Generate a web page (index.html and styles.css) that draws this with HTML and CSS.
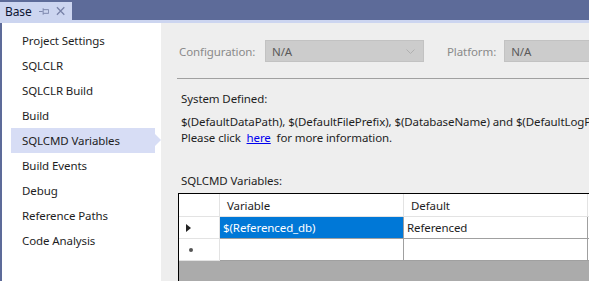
FILE: index.html
```html
<!DOCTYPE html>
<html lang="en">
<head>
    <meta charset="UTF-8">
    <title>Base - Properties</title>
    <link rel="stylesheet" href="styles.css">
</head>
<body>
    <div class="doc-well">
        <div class="tab">
            <span class="tab-title">Base</span>
            <svg class="tab-icon" width="11" height="9" viewBox="0 0 11 9">
                <path d="M0 4.5H4M4.5 1V8M4.5 2.5H10.5V6.5H4.5" fill="none" stroke="#7882a8" stroke-width="1"/>
            </svg>
            <svg class="tab-icon" width="10" height="10" viewBox="0 0 10 10">
                <path d="M1 1L9 9M9 1L1 9" stroke="#7882a8" stroke-width="1.4"/>
            </svg>
        </div>
    </div>
    <div class="window">
        <ul class="nav">
            <li>Project Settings</li>
            <li>SQLCLR</li>
            <li>SQLCLR Build</li>
            <li>Build</li>
            <li class="active">SQLCMD Variables</li>
            <li>Build Events</li>
            <li>Debug</li>
            <li>Reference Paths</li>
            <li>Code Analysis</li>
        </ul>
        <div class="page">
            <div class="config-row">
                <span class="config-label config-first">Configuration:</span>
                <div class="combo combo-config">
                    <span>N/A</span>
                    <svg width="9" height="5" viewBox="0 0 9 5">
                        <path d="M0.5 0.5L4.5 4.5L8.5 0.5" fill="none" stroke="#b0b0b0" stroke-width="1"/>
                    </svg>
                </div>
                <span class="config-label platform-label">Platform:</span>
                <div class="combo combo-platform"><span>N/A</span></div>
            </div>
            <div class="content">
                <p class="heading">System Defined:</p>
                <p class="line">$(DefaultDataPath), $(DefaultFilePrefix), $(DatabaseName) and $(DefaultLogPath)</p>
                <p class="line">Please click &nbsp;<a href="#">here</a>&nbsp; for more information.</p>
                <p class="grid-label">SQLCMD Variables:</p>
                <div class="grid">
                    <div class="row head">
                        <div class="cell rowhead"></div>
                        <div class="cell col-var">Variable</div>
                        <div class="cell col-def">Default</div>
                        <div class="cell col-rest"></div>
                    </div>
                    <div class="row">
                        <div class="cell rowhead"><span class="current"></span></div>
                        <div class="cell col-var selected">$(Referenced_db)</div>
                        <div class="cell col-def">Referenced</div>
                        <div class="cell col-rest"></div>
                    </div>
                    <div class="row">
                        <div class="cell rowhead"><span class="newrow"></span></div>
                        <div class="cell col-var"></div>
                        <div class="cell col-def"></div>
                        <div class="cell col-rest"></div>
                    </div>
                    <div class="grid-empty"></div>
                </div>
            </div>
        </div>
    </div>
</body>
</html>
```

FILE: styles.css
```css
body {
    margin: 0;
    width: 589px;
    height: 281px;
    overflow: hidden;
    font-family: 'Noto Sans', sans-serif;
    font-size: 11.5px;
    letter-spacing: -0.1px;
    color: #1e1e1e;
    background-color: #5d6b99;
}

.doc-well {
    height: 20px;
    border-bottom: 3px solid #ccd5f0;
    display: flex;
    align-items: flex-end;
}

.tab {
    width: 72px;
    height: 18px;
    background-color: #ccd5f0;
    display: flex;
    align-items: center;
    box-sizing: border-box;
    padding-left: 5px;
    font-size: 12px;
}

.tab-title {
    color: #0e1633;
    margin-right: 7px;
}

.tab-icon {
    margin-right: 7px;
}

.window {
    display: flex;
    height: 258px;
    margin-left: 2px;
}

.nav {
    list-style: none;
    margin: 0;
    padding: 5px 0 0 9px;
    width: 150px;
    background-color: white;
}

.nav li {
    position: relative;
    height: 25px;
    line-height: 25px;
    padding-left: 11px;
    width: 144px;
    box-sizing: border-box;
    white-space: nowrap;
}

.nav li.active {
    background-color: #d7ddf5;
}

.nav li.active::after {
    content: "";
    position: absolute;
    right: -6px;
    top: 6px;
    border-left: 6px solid #d7ddf5;
    border-top: 6px solid transparent;
    border-bottom: 6px solid transparent;
}

.page {
    flex: 1;
    background-color: #eeeeee;
    overflow: hidden;
}

.config-row {
    display: flex;
    align-items: center;
    height: 22px;
    margin: 17px 0 0 16px;
    padding-left: 2px;
    padding-bottom: 16px;
    border-bottom: 1px solid #a0a0a0;
}

.config-label {
    color: #8a8a8a;
    margin-right: 8px;
    white-space: nowrap;
    flex-shrink: 0;
}

.config-first {
    width: 78px;
}

.platform-label {
    margin-left: 23px;
}

.combo {
    height: 22px;
    box-sizing: border-box;
    border: 1px solid #c2c2c2;
    background-color: #cccccc;
    color: #5a5a5a;
    display: flex;
    align-items: center;
    justify-content: space-between;
    padding: 0 8px 0 6px;
    flex-shrink: 0;
}

.combo-config {
    width: 159px;
}

.combo-platform {
    width: 120px;
}

.content {
    padding: 12px 0 0 20px;
}

.content p {
    margin: 0;
    white-space: nowrap;
    line-height: 16px;
}

.heading {
    margin-bottom: 7px !important;
}

.content a {
    color: #0000ee;
}

.grid-label {
    margin-top: 27px !important;
    margin-bottom: 4px !important;
}

.grid {
    margin-left: -3px;
    border-left: 1px solid #000;
    border-top: 1px solid #000;
    background-color: #ababab;
    height: 100px;
}

.row {
    display: flex;
    height: 22px;
    background-color: white;
}

.cell {
    box-sizing: border-box;
    border-right: 1px solid #a0a0a0;
    border-bottom: 1px solid #a0a0a0;
    display: flex;
    align-items: center;
    padding-left: 3px;
    white-space: nowrap;
    flex-shrink: 0;
}

.head .cell,
.cell.rowhead {
    border-color: #e3e3e3;
}

.head .cell {
    padding-left: 7px;
    height: 23px;
}

.head {
    height: 23px;
}

.rowhead {
    width: 41px;
    padding-left: 0;
}

.col-var {
    width: 184px;
}

.col-def {
    width: 184px;
}

.col-rest {
    flex: 1;
}

.selected {
    background-color: #0078d7;
    color: white;
}

.current {
    margin-left: 7px;
    border-left: 5px solid #222;
    border-top: 4px solid transparent;
    border-bottom: 4px solid transparent;
}

.newrow {
    margin-left: 10px;
    width: 4px;
    height: 4px;
    border-radius: 50%;
    background-color: #555;
}

.grid-empty {
    height: 40px;
}
```
